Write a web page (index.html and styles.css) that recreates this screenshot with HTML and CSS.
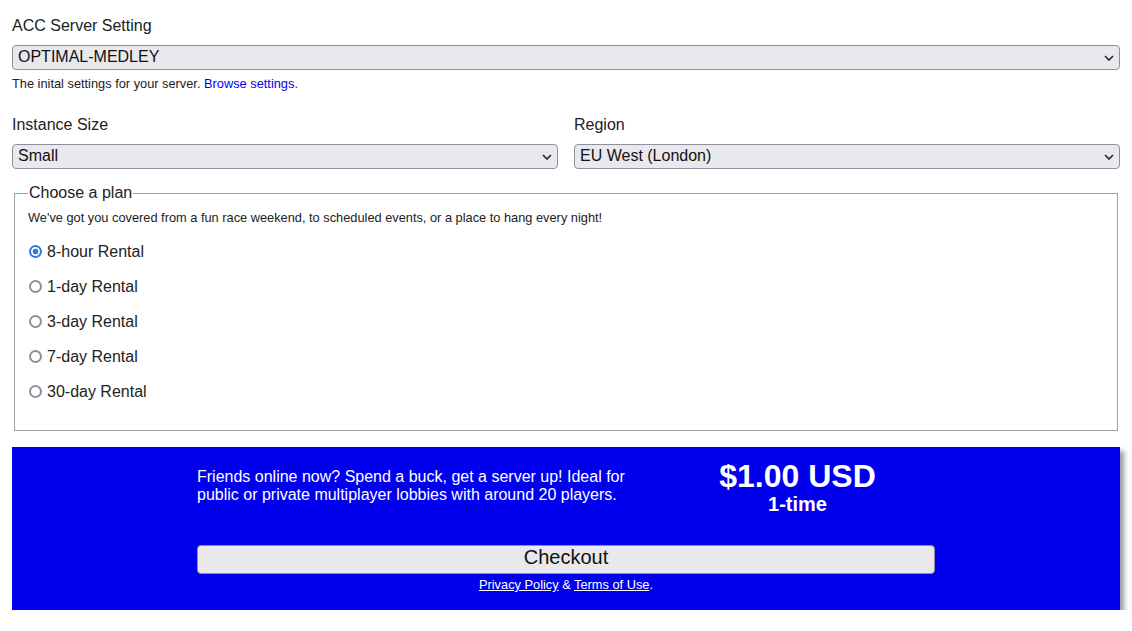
FILE: index.html
```html
<!DOCTYPE html>
<html lang="en">
<head>
<meta charset="utf-8">
<title>ACC Server</title>
<link rel="stylesheet" href="styles.css">
</head>
<body>
<form class="page">
  <div class="field">
    <label class="label" for="setting">ACC Server Setting</label>
    <div class="select-wrap">
      <select id="setting" class="select"><option>OPTIMAL-MEDLEY</option></select>
      <svg class="chev" width="10" height="6" viewBox="0 0 10 6"><path d="M1 1l4 4 4-4" fill="none" stroke="#222" stroke-width="1.6"/></svg>
    </div>
    <p class="help">The inital settings for your server. <a href="#" class="link">Browse settings</a>.</p>
  </div>

  <div class="row">
    <div class="field">
      <label class="label" for="size">Instance Size</label>
      <div class="select-wrap">
        <select id="size" class="select"><option>Small</option></select>
        <svg class="chev" width="10" height="6" viewBox="0 0 10 6"><path d="M1 1l4 4 4-4" fill="none" stroke="#222" stroke-width="1.6"/></svg>
      </div>
    </div>
    <div class="field">
      <label class="label" for="region">Region</label>
      <div class="select-wrap">
        <select id="region" class="select"><option>EU West (London)</option></select>
        <svg class="chev" width="10" height="6" viewBox="0 0 10 6"><path d="M1 1l4 4 4-4" fill="none" stroke="#222" stroke-width="1.6"/></svg>
      </div>
    </div>
  </div>

  <fieldset class="plans">
    <legend class="legend">Choose a plan</legend>
    <p class="desc">We've got you covered from a fun race weekend, to scheduled events, or a place to hang every night!</p>
    <label class="radio"><input type="radio" name="plan" checked> 8-hour Rental</label>
    <label class="radio"><input type="radio" name="plan"> 1-day Rental</label>
    <label class="radio"><input type="radio" name="plan"> 3-day Rental</label>
    <label class="radio"><input type="radio" name="plan"> 7-day Rental</label>
    <label class="radio"><input type="radio" name="plan"> 30-day Rental</label>
  </fieldset>

  <section class="checkout">
    <div class="checkout-inner">
      <div class="summary">
        <p class="pitch">Friends online now? Spend a buck, get a server up! Ideal for public or private multiplayer lobbies with around 20 players.</p>
        <div class="price">
          <div class="amount">$1.00 USD</div>
          <div class="term">1-time</div>
        </div>
      </div>
      <button type="button" class="btn">Checkout</button>
      <p class="legal"><a href="#" class="legal-link">Privacy Policy</a> &amp; <a href="#" class="legal-link">Terms of Use</a>.</p>
    </div>
  </section>
</form>
</body>
</html>
```

FILE: styles.css
```css
* { box-sizing: border-box; }
html, body { margin: 0; padding: 0; background: #fff; }
body {
  font-family: "Liberation Sans", Arial, sans-serif;
  color: #222;
  font-size: 16px;
}
.page {
  padding: 17px 12px 0 12px;
}
.label {
  display: block;
  font-size: 16px;
  line-height: 18px;
  margin-bottom: 10px;
}
.select-wrap { position: relative; }
.select {
  -webkit-appearance: none;
  appearance: none;
  display: block;
  width: 100%;
  height: 25px;
  font-family: "Liberation Sans", Arial, sans-serif;
  font-size: 16px;
  line-height: 18px;
  color: #111;
  background: #e9e9ed;
  border: 1px solid #8f8f9d;
  border-radius: 4px;
  padding: 0 5px 2px 5px;
  margin: 0;
}
.chev {
  position: absolute;
  right: 6px;
  top: 10px;
  pointer-events: none;
}
.help {
  font-size: 12.8px;
  line-height: 14px;
  margin: 7px 0 0 0;
}
.link { color: #0000ee; text-decoration: none; }
.row {
  display: grid;
  grid-template-columns: 1fr 1fr;
  column-gap: 16px;
  margin-top: 25px;
}
.plans {
  margin: 16px 2px 0 2px;
  border: 1px solid #a0a0a0;
  padding: 0 13px 21px 13px;
}
.legend {
  padding: 0 1px;
  font-size: 16px;
  line-height: 16px;
}
.desc {
  font-size: 12.8px;
  line-height: 14px;
  margin: 10px 0 9px 0;
}
.radio {
  display: flex;
  align-items: center;
  height: 35px;
  font-size: 16px;
}
.radio input {
  -webkit-appearance: none;
  appearance: none;
  margin: 0 5px 0 1px;
  width: 13px;
  height: 13px;
  border: 2px solid #8f8f9d;
  border-radius: 50%;
  background: #fff;
  flex: none;
}
.radio input:checked {
  border-color: #2f7ae5;
  background: radial-gradient(circle, #2f7ae5 0 2.6px, #fff 3.2px);
}
.checkout {
  margin-top: 16px;
  background: #0000ee;
  color: #fff;
  box-shadow: 4px 4px 5px #999;
  padding: 16px 0 17px 0;
}
.checkout-inner {
  width: 738px;
  margin: 0 auto;
}
.summary {
  display: grid;
  grid-template-columns: 1fr 275px;
  align-items: start;
  min-height: 82px;
}
.pitch {
  margin: 5px 0 0 0;
  font-size: 16px;
  line-height: 18px;
  max-width: 440px;
}
.price {
  text-align: center;
  font-weight: bold;
}
.amount { font-size: 32px; line-height: 32px; margin-top: -3px; }
.term { font-size: 20px; line-height: 25px; }
.btn {
  display: block;
  width: 100%;
  height: 29px;
  font-family: "Liberation Sans", Arial, sans-serif;
  font-size: 20px;
  color: #111;
  background: #e9e9ed;
  border: 1px solid #8f8f9d;
  border-radius: 4px;
  padding: 0 0 5px 0;
}
.legal {
  text-align: center;
  font-size: 12.8px;
  line-height: 16px;
  margin: 3px 0 0 0;
}
.legal-link { color: #fff; text-decoration: underline; }
```
